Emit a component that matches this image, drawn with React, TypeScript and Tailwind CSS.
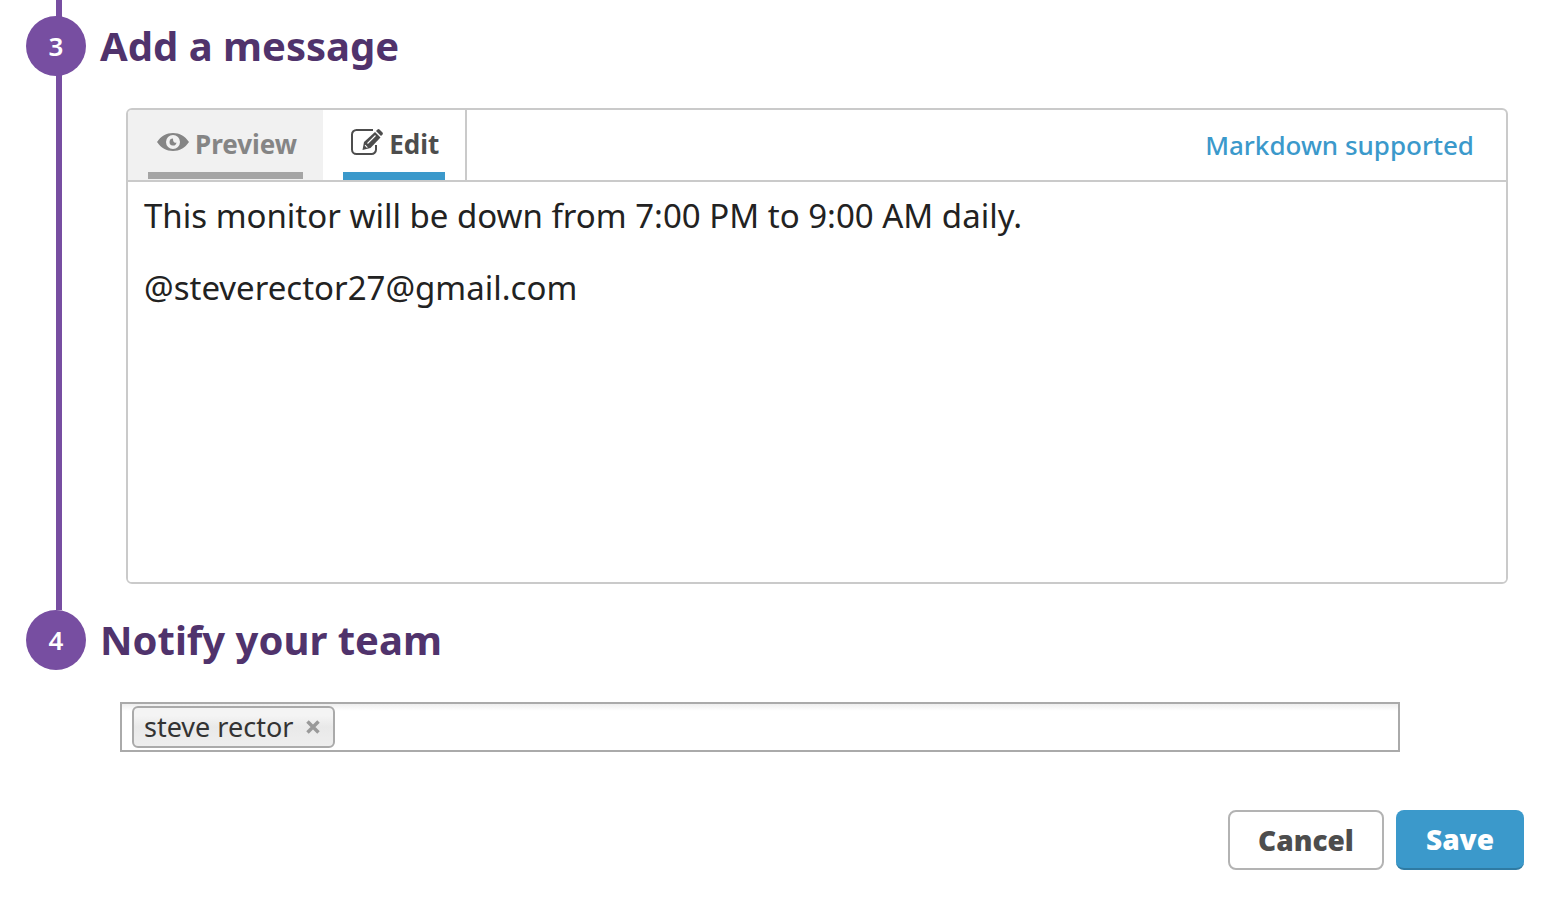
import React from "react";

const font = "font-['Noto_Sans',sans-serif]";

function StepHeading({ number, children }: { number: number; children: React.ReactNode }) {
  return (
    <div className="flex items-center gap-3.5">
      <span className="flex size-[60px] shrink-0 items-center justify-center rounded-full bg-[#774ea1] text-[26px] font-semibold leading-none text-white">
        {number}
      </span>
      <h2 className="text-[40px] font-bold leading-[58px] text-[#50336c]">{children}</h2>
    </div>
  );
}

function EyeIcon() {
  return (
    <svg className="mb-1 h-5 w-8" viewBox="0 0 32 20" fill="currentColor" aria-hidden="true">
      <path
        fillRule="evenodd"
        d="M0 10C4 4 9.500 1 16 1s12 3 16 9c-4 6-9.500 9-16 9S4 16 0 10ZM16 3a7 7 0 1 0 0 14a7 7 0 0 0 0-14Z"
      />
      <path d="M16 6.600a3.500 3.500 0 1 0 3.500 3.900c-1.600.9-3.700-.1-3.500-3.900Z" />
    </svg>
  );
}

function EditIcon() {
  return (
    <svg className="mb-1 h-7 w-8" viewBox="0 0 32 28" fill="none" aria-hidden="true">
      <path
        d="M22 2H5.500A4.500 4.500 0 0 0 1 6.500v15A4.500 4.500 0 0 0 5.500 26h15a4.500 4.500 0 0 0 4.500-4.500V17"
        stroke="currentColor"
        strokeWidth="2"
      />
      <path d="M11.500 22l1.500-8L24 4l5.500 5.500L19.500 20Z" fill="currentColor" />
      <path d="M25 3l1.500-1.500q1-.9 2 0l3 3q.8 1 0 2L30 8Z" fill="currentColor" />
      <path d="M16.500 15.500l8-8M14 17.200l2.400 2.400" stroke="white" strokeWidth="1.100" />
    </svg>
  );
}

export default function App() {
  return (
    <main className={`${font} flex min-h-screen flex-col bg-white pr-[22px] pl-[26px]`}>
      <section className="relative pt-4 pb-[26px]">
        <div className="absolute inset-y-0 left-[30px] w-1.5 bg-[#774ea1]" />
        <div className="relative">
          <StepHeading number={3}>Add a message</StepHeading>
        </div>
        <div className="mt-8 mr-4 ml-[100px] overflow-hidden rounded-md border-2 border-[#cacaca]">
          <div className="flex h-[72px] items-stretch border-b-2 border-[#cacaca]">
            <div role="tablist" className="flex border-r-2 border-[#cacaca] text-[26px] font-bold">
              <button
                type="button"
                role="tab"
                aria-selected="false"
                className="flex flex-col bg-[#f1f1f1] px-5 text-[#858585]"
              >
                <span className="flex h-[62px] items-center gap-1.5 pt-1.5 pr-1.5 pl-[9px]">
                  <EyeIcon />
                  Preview
                </span>
                <span className="h-[7px] w-full bg-[#a5a5a5]" />
              </button>
              <button type="button" role="tab" aria-selected="true" className="flex flex-col px-5 text-[#4d4d4d]">
                <span className="flex h-[62px] items-center gap-1.5 pt-1.5 pr-1.5 pl-2">
                  <EditIcon />
                  Edit
                </span>
                <span className="h-2 w-full bg-[#3b99cb]" />
              </button>
            </div>
            <a href="#markdown" className="mr-8 ml-auto self-center text-[26px] font-medium text-[#3b99cb]">
              Markdown supported
            </a>
          </div>
          <textarea
            aria-label="Message"
            className="block h-[400px] w-full resize-none bg-white px-4 py-4 text-[33px] leading-9 text-[#222] outline-none"
            defaultValue={"This monitor will be down from 7:00 PM to 9:00 AM daily.\n\n@steverector27@gmail.com"}
          />
        </div>
      </section>

      <section>
        <StepHeading number={4}>Notify your team</StepHeading>
        <div className="mt-8 mr-[124px] ml-[94px] flex h-[50px] items-center gap-2 border-2 border-[#aaa] bg-linear-to-b from-[#eee] to-white to-15% px-2.5">
          <span className="flex h-[42px] shrink-0 items-center gap-3 rounded-md border-2 border-[#aaa] bg-linear-to-b from-[#f4f4f4] from-20% via-[#e9e9e9] to-[#eee] pr-3 pl-2.5 text-[27px] leading-9 text-[#333]">
            steve rector
            <button type="button" aria-label="Remove steve rector" className="text-[#999]">
              <svg className="size-4" viewBox="0 0 16 16" stroke="currentColor" strokeWidth="3.500" aria-hidden="true">
                <path d="M2.500 2.500l11 11M13.500 2.500l-11 11" />
              </svg>
            </button>
          </span>
          <input aria-label="Add a team member" className="min-w-0 flex-1 bg-transparent text-[27px] outline-none" />
        </div>
      </section>

      <div className="mt-[58px] flex justify-end gap-3 pb-7 text-[28px] font-extrabold">
        <button type="button" className="h-[60px] w-[156px] rounded-lg border-2 border-[#b3b3b3] font-['Open_Sans',sans-serif] text-[#4d4d4d]">
          Cancel
        </button>
        <button type="button" className="h-[60px] w-32 rounded-lg border-b-2 border-[#2f7ba3] bg-[#3b99cb] font-['Open_Sans',sans-serif] text-white">
          Save
        </button>
      </div>
    </main>
  );
}
